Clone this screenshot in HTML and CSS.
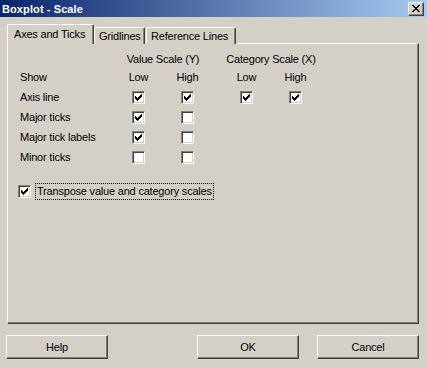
FILE: index.html
```html
<!DOCTYPE html>
<html>
<head>
<meta charset="utf-8">
<link rel="stylesheet" href="styles.css">
</head>
<body>
<div class="window">
  <div class="titlebar">
    <span class="title">Boxplot - Scale</span>
    <div class="close">
      <svg width="8" height="7" viewBox="0 0 8 7" shape-rendering="crispEdges"><path d="M0 0h2v1H0zM6 0h2v1H6zM1 1h2v1H1zM5 1h2v1H5zM2 2h4v1H2zM3 3h2v1H3zM2 4h4v1H2zM1 5h2v1H1zM5 5h2v1H5zM0 6h2v1H0zM6 6h2v1H6z" fill="#000"/></svg>
    </div>
  </div>

  <div class="tabs">
    <div class="tab active t1">Axes and Ticks</div>
    <div class="tab t2">Gridlines</div>
    <div class="tab t3">Reference Lines</div>
  </div>

  <div class="panel">
    <div class="grid">
      <div class="group g1">Value Scale (Y)</div>
      <div class="group g2">Category Scale (X)</div>

      <div class="lbl r2">Show</div>
      <div class="hd r2 c2">Low</div>
      <div class="hd r2 c3">High</div>
      <div class="hd r2 c5">Low</div>
      <div class="hd r2 c6">High</div>

      <div class="lbl r3">Axis line</div>
      <div class="cell r3 c2"><span class="cb on"></span></div>
      <div class="cell r3 c3"><span class="cb on"></span></div>
      <div class="cell r3 c5"><span class="cb on"></span></div>
      <div class="cell r3 c6"><span class="cb on"></span></div>

      <div class="lbl r4">Major ticks</div>
      <div class="cell r4 c2"><span class="cb on"></span></div>
      <div class="cell r4 c3"><span class="cb"></span></div>

      <div class="lbl r5">Major tick labels</div>
      <div class="cell r5 c2"><span class="cb on"></span></div>
      <div class="cell r5 c3"><span class="cb"></span></div>

      <div class="lbl r6">Minor ticks</div>
      <div class="cell r6 c2"><span class="cb"></span></div>
      <div class="cell r6 c3"><span class="cb"></span></div>
    </div>

    <div class="transpose">
      <span class="cb on"></span>
      <span class="focus">Transpose value and category scales</span>
    </div>
  </div>

  <div class="buttons">
    <div class="btn help">Help</div>
    <div class="btn ok">OK</div>
    <div class="btn cancel">Cancel</div>
  </div>
</div>
</body>
</html>
```

FILE: styles.css
```css
html, body {
  margin: 0;
  padding: 0;
}
body {
  width: 427px;
  height: 367px;
  background: #d4d0c8;
  font-family: "Liberation Sans", Arial, sans-serif;
  font-size: 11px;
  letter-spacing: -0.2px;
  color: #000;
  overflow: hidden;
}
.window {
  display: flex;
  flex-direction: column;
}
.titlebar {
  height: 17px;
  background: linear-gradient(to right, #0a246a, #a6caf0);
  display: flex;
  align-items: center;
  justify-content: space-between;
  padding: 0 3px 0 2px;
}
.title {
  color: #fff;
  font-weight: bold;
  font-size: 11px;
  letter-spacing: 0.1px;
}
.close {
  width: 16px;
  height: 14px;
  box-sizing: border-box;
  background: #d4d0c8;
  border-top: 1px solid #fff;
  border-left: 1px solid #fff;
  border-right: 1px solid #404040;
  border-bottom: 1px solid #404040;
  box-shadow: inset -1px -1px 0 #808080;
  display: flex;
  align-items: center;
  justify-content: center;
  padding: 0 1px 1px 0;
}
.close svg { display: block; }

.tabs {
  display: flex;
  align-items: flex-end;
  margin-top: 7px;
  padding-left: 7px;
  height: 20px;
  position: relative;
  z-index: 1;
  margin-bottom: -1px;
}
.tab {
  box-sizing: border-box;
  height: 17px;
  background: #d4d0c8;
  border-top: 1px solid #fff;
  border-left: 1px solid #fff;
  border-right: 1px solid #404040;
  box-shadow: inset -1px 0 0 #808080;
  border-radius: 2px 2px 0 0;
  display: flex;
  align-items: center;
  padding-left: 4px;
  white-space: nowrap;
}
.tab.active {
  height: 20px;
  padding-left: 6px;
  padding-bottom: 1px;
}
.t1 { width: 87px; }
.t2 { width: 51px; }
.t3 { width: 90px; margin-left: 1px; }

.panel {
  box-sizing: border-box;
  width: 412px;
  height: 281px;
  margin-left: 7px;
  border-top: 1px solid #fff;
  border-left: 1px solid #fff;
  border-right: 1px solid #404040;
  border-bottom: 1px solid #404040;
  box-shadow: inset -1px -1px 0 #808080;
  padding: 7px 0 0 12px;
}
.grid {
  display: grid;
  grid-template-columns: 94px 49px 49px 10px 49px 49px;
  grid-template-rows: 16px 20px 20px 20px 20px 20px;
  align-items: center;
}
.group { text-align: center; white-space: nowrap; }
.g1 { grid-column: 2 / 4; grid-row: 1; }
.g2 { grid-column: 5 / 7; grid-row: 1; }
.lbl { grid-column: 1; white-space: nowrap; }
.r2 { grid-row: 2; }
.r3 { grid-row: 3; }
.r4 { grid-row: 4; }
.r5 { grid-row: 5; }
.r6 { grid-row: 6; }
.hd, .cell { text-align: center; }
.c2 { grid-column: 2; }
.c3 { grid-column: 3; }
.c5 { grid-column: 5; }
.c6 { grid-column: 6; }
.cell { display: flex; justify-content: center; }

.cb {
  display: inline-block;
  width: 13px;
  height: 13px;
  box-sizing: border-box;
  background: #fff;
  border-top: 1px solid #808080;
  border-left: 1px solid #808080;
  border-right: 1px solid #fff;
  border-bottom: 1px solid #fff;
  box-shadow: inset 1px 1px 0 #404040, inset -1px -1px 0 #d4d0c8;
  flex: none;
}
.cb.on {
  background: #fff url("data:image/svg+xml;utf8,<svg xmlns='http://www.w3.org/2000/svg' width='7' height='7' shape-rendering='crispEdges'><path d='M0 2h1v3H0zM1 3h1v3H1zM2 4h1v3H2zM3 3h1v3H3zM4 2h1v3H4zM5 1h1v3H5zM6 0h1v3H6z' fill='black'/></svg>") no-repeat 2px 2px;
}

.transpose {
  display: flex;
  align-items: center;
  margin-top: 16px;
  margin-left: -2px;
  height: 17px;
}
.focus {
  margin-left: 4px;
  border: 1px dotted #000;
  padding: 0 1px;
  line-height: 15px;
  white-space: nowrap;
}

.buttons {
  display: flex;
  margin-top: 11px;
  padding-left: 6px;
}
.btn {
  box-sizing: border-box;
  width: 102px;
  height: 24px;
  border-top: 1px solid #fff;
  border-left: 1px solid #fff;
  border-right: 1px solid #404040;
  border-bottom: 1px solid #404040;
  box-shadow: inset -1px -1px 0 #808080;
  display: flex;
  align-items: center;
  justify-content: center;
  padding-bottom: 1px;
}
.ok { margin-left: 89px; }
.cancel { margin-left: 18px; }
```
